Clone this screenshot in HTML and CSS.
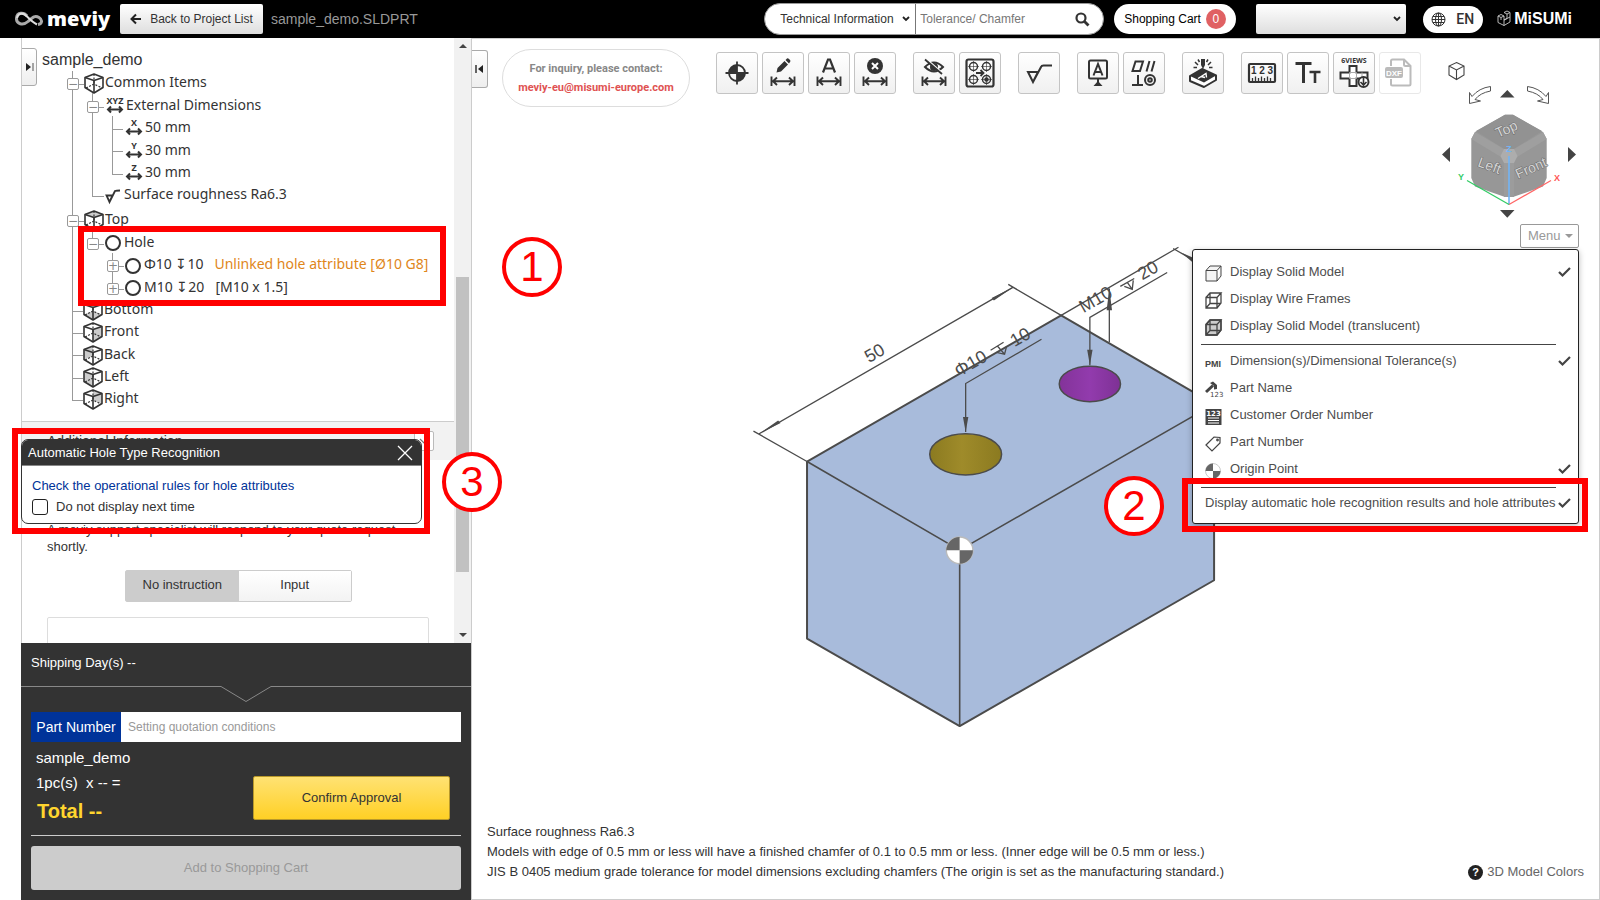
FILE: index.html
```html
<!DOCTYPE html>
<html lang="en">
<head>
<meta charset="utf-8">
<title>meviy - sample_demo.SLDPRT</title>
<link rel="stylesheet" href="styles.css">
</head>
<body>
<svg class="defs" aria-hidden="true">
  <defs>
    <g id="cube-lines" fill="none" stroke="#333" stroke-width="1.6" stroke-linejoin="round">
      <path d="M10 1 19 4.500V14.500L10 20 1 14.500V4.500Z"/>
      <path d="M1 4.500 10 7.500 19 4.500M10 7.500V20"/>
      <path d="M10 1V11M2 15 10 11 18 15" stroke-width="1.200" stroke-dasharray="2 1.500"/>
    </g>
    <g id="span" fill="none" stroke="#333" stroke-width="1.900">
      <path d="M3.500 18.500V28M26.500 18.500V28M5 23.300H25M9 19.500 5 23.300 9 27M21 19.500 25 23.300 21 27"/>
    </g>
    <g id="arrows" fill="none" stroke="#333" stroke-width="2">
      <path d="M2 13.500H16M5 10.500 2 13.500 5 16.500M13 10.500 16 13.500 13 16.500"/>
    </g>
    <g id="quarters">
      <circle cx="8" cy="8" r="7.500" fill="#fff" stroke="#bbb" stroke-width=".8"/>
      <path d="M8 8V.5A7.500 7.500 0 0 0 .5 8ZM8 8V15.500A7.500 7.500 0 0 0 15.500 8Z" fill="#666"/>
    </g>
    <path id="tick" d="M1 6 4.500 9.500 12 2" fill="none" stroke="#444" stroke-width="2.200"/>
  </defs>
</svg>

<header class="topbar">
  <a class="brand" href="#" aria-label="meviy">
    <svg width="29" height="16" viewBox="0 0 29 16"><path d="M12 5C9 1 2 1 1.500 7S8 15 13 10.500 20 4 24 6.500 27 13 23 13.500" fill="none" stroke="#aaa" stroke-width="3"/><path d="M2 7C3 2 8 1.500 11 4.500S17 11 22 13.500" fill="none" stroke="#ddd" stroke-width="2"/></svg>
    <span>meviy</span>
  </a>
  <button class="back"><svg width="12" height="12" viewBox="0 0 12 12"><path d="M11 6H2M6 1.500 1.500 6 6 10.500" fill="none" stroke="#222" stroke-width="2"/></svg>Back to Project List</button>
  <span class="filename">sample_demo.SLDPRT</span>
  <form class="search">
    <select class="topic" aria-label="Search category"><option>Technical Information</option></select>
    <input type="text" placeholder="Tolerance/ Chamfer" aria-label="Search">
    <button type="button" aria-label="Search"><svg width="15" height="15" viewBox="0 0 15 15"><circle cx="6" cy="6" r="4.500" fill="none" stroke="#333" stroke-width="2.200"/><path d="M9.500 9.500 13.500 13.500" stroke="#333" stroke-width="2.800"/></svg></button>
  </form>
  <a class="cart" href="#">Shopping Cart<span class="count">0</span></a>
  <select class="account" aria-label="Account"><option></option></select>
  <button class="lang"><svg width="15" height="15" viewBox="0 0 15 15" fill="none" stroke="#333"><circle cx="7.500" cy="7.500" r="6.500"/><ellipse cx="7.500" cy="7.500" rx="3" ry="6.500"/><path d="M7.500 1V14M1 7.500H14M2 4.500H13M2 10.500H13"/></svg>EN</button>
  <a class="misumi" href="#"><svg width="14" height="18" viewBox="0 0 14 18" fill="none" stroke="#ccc" stroke-width=".9"><path d="M1 6 4 4.500 7 6V15.500L1 12.500ZM1 6 4 7.500 7 6M4 7.500V10M7 10 13 7V12L7 15.500M7 10 10 8.500V4L7 2.500 10 1 13 2.500V7M10 4 13 2.500"/></svg><span>MiSUMi</span></a>
</header>

<main class="workspace">
  <aside class="sidebar">
    <div class="scroll">
      <div class="scroll-body">
        <button class="fold fold-left" aria-label="Expand panel"><svg width="9" height="10" viewBox="0 0 9 10"><path d="M1 1 6 5 1 9Z" fill="#222"/><path d="M8 1V9" stroke="#888" stroke-width="1.500"/></svg></button>
        <nav class="tree" aria-label="Model tree">
          <div class="root">sample_demo</div>
          <ul>
            <li>
              <div class="row"><button class="exp" aria-label="Collapse">−</button><svg class="cube" width="20" height="21" viewBox="0 0 20 21"><use href="#cube-lines"/></svg>Common Items</div>
              <ul>
                <li>
                  <div class="row tall"><button class="exp" aria-label="Collapse">−</button><svg class="xyz" width="20" height="19" viewBox="0 0 20 19"><text x="10" y="8" text-anchor="middle" class="axis">XYZ</text><use href="#arrows" x="1"/></svg>External Dimensions</div>
                  <ul>
                    <li><div class="row leaf"><svg class="dim" width="18" height="19" viewBox="0 0 18 19"><text x="9" y="8" text-anchor="middle" class="axis">X</text><use href="#arrows"/></svg>50 mm</div></li>
                    <li><div class="row leaf tall"><svg class="dim" width="18" height="19" viewBox="0 0 18 19"><text x="9" y="8" text-anchor="middle" class="axis">Y</text><use href="#arrows"/></svg>30 mm</div></li>
                    <li><div class="row leaf"><svg class="dim" width="18" height="19" viewBox="0 0 18 19"><text x="9" y="8" text-anchor="middle" class="axis">Z</text><use href="#arrows"/></svg>30 mm</div></li>
                  </ul>
                </li>
                <li><div class="row leaf rough"><svg width="18" height="19" viewBox="0 0 18 19"><path d="M2.500 9.500H8.500L5.500 16Z M5.500 16 11 5Q12 4.500 16 4.500" fill="none" stroke="#333" stroke-width="1.800"/></svg>Surface roughness Ra6.3</div></li>
              </ul>
            </li>
            <li class="face-top">
              <div class="row"><button class="exp" aria-label="Collapse">−</button><svg class="cube" width="20" height="21" viewBox="0 0 20 21"><path d="M10 1 19 4.500 10 7.500 1 4.500Z" fill="#ccc"/><use href="#cube-lines"/></svg>Top</div>
              <ul>
                <li>
                  <div class="row tall"><button class="exp" aria-label="Collapse">−</button><svg width="18" height="18" viewBox="0 0 18 18"><circle cx="9" cy="9" r="7" fill="none" stroke="#333" stroke-width="2"/></svg>Hole</div>
                  <ul>
                    <li><div class="row"><button class="exp" aria-label="Expand">+</button><svg width="18" height="18" viewBox="0 0 18 18"><circle cx="9" cy="9" r="7" fill="none" stroke="#333" stroke-width="2"/></svg>Φ10 ↧10<span class="attr warn">Unlinked hole attribute [Ø10 G8]</span></div></li>
                    <li><div class="row tall"><button class="exp" aria-label="Expand">+</button><svg width="18" height="18" viewBox="0 0 18 18"><circle cx="9" cy="9" r="7" fill="none" stroke="#333" stroke-width="2"/></svg>M10 ↧20<span class="attr">[M10 x 1.5]</span></div></li>
                  </ul>
                </li>
              </ul>
            </li>
            <li><div class="row leaf"><svg class="cube" width="20" height="21" viewBox="0 0 20 21"><path d="M10 11 19 14.500 10 20 1 14.500Z" fill="#ccc"/><use href="#cube-lines"/></svg>Bottom</div></li>
            <li><div class="row leaf"><svg class="cube" width="20" height="21" viewBox="0 0 20 21"><path d="M10 7.500 19 4.500V14.500L10 20Z" fill="#ccc"/><use href="#cube-lines"/></svg>Front</div></li>
            <li><div class="row leaf tall"><svg class="cube" width="20" height="21" viewBox="0 0 20 21"><path d="M10 1V11L1 14.500V4.500Z" fill="#ccc"/><use href="#cube-lines"/></svg>Back</div></li>
            <li><div class="row leaf"><svg class="cube" width="20" height="21" viewBox="0 0 20 21"><path d="M1 4.500 10 7.500V20L1 14.500Z" fill="#ccc"/><use href="#cube-lines"/></svg>Left</div></li>
            <li><div class="row leaf"><svg class="cube" width="20" height="21" viewBox="0 0 20 21"><path d="M10 1 19 4.500V14.500L10 11Z" fill="#ccc"/><use href="#cube-lines"/></svg>Right</div></li>
          </ul>
          <div class="mark mark-tree"></div>
        </nav>
        <section class="additional">
          <h2>Additional Information<button aria-label="Toggle section"><svg width="10" height="7" viewBox="0 0 10 7"><path d="M1 1 5 5 9 1" fill="none" stroke="#777" stroke-width="1.200"/></svg></button></h2>
          <hr>
          <p>A meviy support specialist will respond to your quote request shortly.</p>
          <div class="segmented"><button class="on">No instruction</button><button>Input</button></div>
          <textarea aria-label="Instruction"></textarea>
        </section>
      </div>
      <div class="bar"><i class="up"></i><span class="thumb"></span><i class="down"></i></div>
    </div>

    <section class="quote">
      <div class="ship">Shipping Day(s) --</div>
      <div class="notch"><i></i><svg width="52" height="17" viewBox="0 0 52 17"><path d="M0 .5H1L26 15.500 51 .5H52" fill="none" stroke="#888"/></svg><i></i></div>
      <div class="quote-body">
        <label class="part"><span>Part Number</span><input type="text" placeholder="Setting quotation conditions"></label>
        <div class="summary">
          <div class="figures">
            <div class="name">sample_demo</div>
            <div class="qty">1pc(s)&nbsp; x -- =</div>
            <div class="total">Total --</div>
          </div>
          <button class="confirm">Confirm Approval</button>
        </div>
        <button class="add" disabled>Add to Shopping Cart</button>
      </div>
    </section>

    <div class="popup" role="dialog" aria-label="Automatic Hole Type Recognition">
      <div class="popup-head">Automatic Hole Type Recognition<button aria-label="Close"><svg width="16" height="16" viewBox="0 0 16 16"><path d="M1 1 15 15M15 1 1 15" stroke="#fff" stroke-width="1.300"/></svg></button></div>
      <div class="popup-body">
        <a href="#">Check the operational rules for hole attributes</a>
        <label><input type="checkbox">Do not display next time</label>
      </div>
    </div>
    <div class="mark mark-popup"></div>
    <div class="step step-3">3</div>
  </aside>

  <section class="viewer">
    <svg class="canvas" viewBox="472 38 1128 862" role="img" aria-label="3D model of sample_demo">
      <defs>
        <linearGradient id="gold"><stop offset="0" stop-color="#8b7a20"/><stop offset=".45" stop-color="#9f8b2a"/><stop offset="1" stop-color="#8b7a20"/></linearGradient>
        <linearGradient id="violet"><stop offset="0" stop-color="#833399"/><stop offset=".5" stop-color="#923bad"/><stop offset="1" stop-color="#7e3195"/></linearGradient>
      </defs>
      <path d="M807 461.500 1061.700 315 1215 404V580.500L960 726.700 807 639Z" fill="#a8bbdb" stroke="#4b4b4b" stroke-width="2" stroke-linejoin="round"/>
      <path d="M807 461.500 960 550.300 1215 404M960 550.300V726.700" fill="none" stroke="#4b4b4b" stroke-width="1.600"/>
      <ellipse cx="966" cy="454.300" rx="36" ry="20.700" fill="url(#gold)" stroke="#4b4b4b" stroke-width="1.500"/>
      <ellipse cx="1090.500" cy="383.700" rx="30.700" ry="17.800" fill="url(#violet)" stroke="#4b4b4b" stroke-width="1.500"/>
      <g fill="none" stroke="#4b4b4b" stroke-width="1.300">
        <path d="M753.300 431 807 461.500M1008.700 284 1061.700 315M759 433.700 1013.300 287"/>
        <path d="M966 432V383.300L1042 339M1090.500 365V317L1168 272"/>
        <path d="M1061.700 315 1179.300 246.700M1174 248 1200 263M1110 288V342"/>
      </g>
      <g fill="#4b4b4b">
        <path d="M759 433.700 778 420.500 780.500 423ZM1013.300 287 994.300 300 992 297.500ZM963.300 417H968.700L966 432ZM1087.800 349.500H1093.200L1090.500 365ZM1110 288 1107.300 310H1112.700ZM1182 252 1196 264 1198 259Z"/>
      </g>
      <g class="dims">
        <text transform="translate(869 363) rotate(-30)">50</text>
        <text transform="translate(959 377) rotate(-30)">Φ10</text>
        <text transform="translate(1015 347) rotate(-30)">10</text>
        <text transform="translate(1084 313) rotate(-30)">M10</text>
        <text transform="translate(1143 280) rotate(-30)">20</text>
      </g>
      <g fill="none" stroke="#4b4b4b" stroke-width="1.300">
        <path d="M991 350 1004 342M998 346 1005 354M997 352 1005 354 1007 346M1121 286 1135 278M1128 282 1133 289M1125 286 1133 289 1134 280"/>
      </g>
      <use href="#quarters" transform="translate(945.700 536.300) scale(1.780)"/>
    </svg>

    <div class="tools-row">
      <button class="fold fold-right" aria-label="Collapse panel"><svg width="9" height="10" viewBox="0 0 9 10"><path d="M8 1 3 5 8 9Z" fill="#222"/><path d="M1 1V9" stroke="#333" stroke-width="1.500"/></svg></button>
      <div class="inquiry"><span>For inquiry, please contact:</span><a href="#">meviy-eu@misumi-europe.com</a></div>
      <div class="toolbar">
        <div class="group">
          <button aria-label="Origin"><svg viewBox="0 0 30 30"><circle cx="15" cy="15" r="8" fill="none" stroke="#333" stroke-width="1.800"/><path d="M15 15V7A8 8 0 0 0 7 15ZM15 15V23A8 8 0 0 0 23 15Z" fill="#333"/><path d="M15 3.500V26.500M3.500 15H26.500" stroke="#333" stroke-width="1.800"/></svg></button>
          <button aria-label="Edit dimension"><svg viewBox="0 0 30 30"><use href="#span"/><path d="M8.500 14.500 9.500 10 16.500 3 20 6.500 13 13.500ZM17.500 2 19 .5Q20 0 21 1L22 2Q23 3 22 4L21 5.500Z" fill="#333"/></svg></button>
          <button aria-label="Text dimension"><svg viewBox="0 0 30 30"><use href="#span"/><path d="M9 14.500 14 1.500H16L21 14.500M10.500 10.500H19.500" fill="none" stroke="#333" stroke-width="2.200"/></svg></button>
          <button aria-label="Delete dimension"><svg viewBox="0 0 30 30"><use href="#span"/><circle cx="15" cy="8" r="8" fill="#333"/><path d="M12 5 18 11M18 5 12 11" stroke="#fff" stroke-width="2"/></svg></button>
        </div>
        <div class="group">
          <button aria-label="Hide dimensions"><svg viewBox="0 0 30 30"><use href="#span"/><path d="M6 9Q15 0 24 9 15 18 6 9Z" fill="none" stroke="#333" stroke-width="2"/><circle cx="15" cy="9" r="4" fill="#333"/><path d="M6 0 22 14" stroke="#fafafa" stroke-width="2"/><path d="M6 1.500 23 16" stroke="#333" stroke-width="1.800"/></svg></button>
          <button aria-label="Copy holes"><svg viewBox="0 0 30 30" fill="none" stroke="#333" stroke-width="1.500"><rect x="1.500" y="1.500" width="27" height="27" rx="2" stroke-width="2.200"/><circle cx="8.500" cy="8.500" r="4"/><circle cx="21.500" cy="8.500" r="4"/><circle cx="8.500" cy="21.500" r="4"/><circle cx="21.500" cy="21.500" r="4"/><circle cx="21.500" cy="21.500" r="1.500" fill="#333"/><path d="M8.500 3V14M3 8.500H14M21.500 3V14M16 8.500H27M8.500 16V27M3 21.500H14M21.500 16V27M16 21.500H27" stroke-width=".6"/><path d="M11 15H18M15.500 12 18.500 15 15.500 18" stroke-width="1.800"/></svg></button>
        </div>
        <div class="group">
          <button aria-label="Surface roughness"><svg viewBox="0 0 30 30"><path d="M4 14H14L9 24ZM9 24 17 9Q17.500 7.500 19.500 7.500H28" fill="none" stroke="#333" stroke-width="2"/></svg></button>
        </div>
        <div class="group">
          <button aria-label="Datum"><svg viewBox="0 0 30 30"><rect x="6" y="2.500" width="18" height="18" rx="1.500" fill="none" stroke="#333" stroke-width="2"/><path d="M10.500 17.500 15 6 19.500 17.500M12 14H18M15 20V27" fill="none" stroke="#333" stroke-width="2"/><path d="M10.500 28 15 23 19.500 28Z" fill="#333"/></svg></button>
          <button aria-label="Geometric tolerance"><svg viewBox="0 0 30 30" fill="none" stroke="#333" stroke-width="2"><path d="M3.500 13 6.500 3.500H14L11 13ZM17.500 13.500 20.500 3M22.500 13.500 25.500 3M9 17V26M3 27H14"/><circle cx="21" cy="22" r="5"/><circle cx="21" cy="22" r="1.800"/></svg></button>
        </div>
        <div class="group">
          <button aria-label="Engraving"><svg viewBox="0 0 30 30"><path d="M2 18 14 11 28 17.500V22L16 29 2 23Z" fill="#fff" stroke="#333" stroke-width="2" stroke-linejoin="round"/><path d="M2 18 14 11 28 17.500 16 24.500Z" fill="#333"/><path d="M10 20.500 18 15.500 18.500 19.500M13 18.500 17 19.500" fill="none" stroke="#fff" stroke-width="1.400"/><path d="M13 1H17V7L15 11 13 7Z" fill="#333"/><path d="M7 4 10 7M23 4 20 7M5.500 9.500H9M24.500 9.500H21M10 1.500 11.500 4M20 1.500 18.500 4" stroke="#333" stroke-width="1.500"/></svg></button>
        </div>
        <div class="group">
          <button aria-label="Measure"><svg viewBox="0 0 30 30"><rect x="2" y="6" width="26" height="18" rx="1" fill="none" stroke="#333" stroke-width="2.200"/><text x="15" y="16" text-anchor="middle" class="num">1 2 3</text><path d="M5.500 23V20M8.500 23V18.500M11.500 23V20M14.500 23V18.500M17.500 23V20M20.500 23V18.500M23.500 23V20" stroke="#333" stroke-width="1.300"/></svg></button>
          <button aria-label="Text size"><svg viewBox="0 0 30 30" fill="none" stroke="#333"><path d="M2.500 5.500H18.500M10.500 5.500V25" stroke-width="3"/><path d="M16.500 14H27.500M22 14V25" stroke-width="2.600"/></svg></button>
          <button aria-label="Six views"><svg viewBox="0 0 30 30"><text x="15" y="5" text-anchor="middle" class="views">6VIEWS</text><path d="M10.500 8H17.500V14.500H28.500V20.500H17.500V28H10.500V20.500H1.500V14.500H10.500Z" fill="#fff" stroke="#333" stroke-width="2"/><path d="M10.500 14.500H17.500V20.500H10.500ZM23 14.500V20" fill="none" stroke="#aaa"/><circle cx="24.500" cy="24" r="5" fill="#fff" stroke="#333" stroke-width="2"/><path d="M24.500 20V26.500M21.500 24 24.500 27 27.500 24" fill="none" stroke="#333" stroke-width="1.600"/></svg></button>
          <button aria-label="DXF" disabled><svg viewBox="0 0 30 30"><path d="M6 8V3Q6 1.500 7.500 1.500H19L25.500 8V26Q25.500 27.500 24 27.500H7.500Q6 27.500 6 26V21M19 1.500V6.500Q19 8 20.500 8H25.500" fill="none" stroke="#bbb" stroke-width="2"/><rect x="0" y="9" width="18" height="11" rx="2" fill="#bbb"/><text x="9" y="17.500" text-anchor="middle" class="dxf">DXF</text></svg></button>
        </div>
      </div>
    </div>

    <svg class="viewcube" width="150" height="162" viewBox="1440 60 150 162" role="img" aria-label="View orientation">
      <path d="M1456.500 62.500 1464 66V75L1456.500 79.500 1449 75V66ZM1449 66 1456.500 70 1464 66M1456.500 70V79.500" fill="#fff" stroke="#444" stroke-width="1.100"/>
      <path id="turn" d="M1490.500 86.500V91Q1480 93 1475 99.500L1480.500 101 1469.500 103.500V92.500L1472 96.500Q1479 88 1490.500 86.500Z" fill="#fff" stroke="#555"/>
      <use href="#turn" transform="translate(3018 0) scale(-1 1)"/>
      <path d="M1500 97.500H1514.500L1507.300 90ZM1500 210H1514.500L1507.300 217.800ZM1442 154.500 1450 147V162ZM1576 154.500 1568 147V162Z" fill="#444"/>
      <path d="M1505 114.700H1513L1543 132 1546.700 139V178L1543 186.500 1513 197H1505L1475 186.500 1471.300 178V139L1475 132Z" fill="#979797"/>
      <path d="M1505 114.700H1513L1542 131 1514 149H1504L1476 131Z" fill="#929292"/>
      <path d="M1475 132 1471.300 139 1501 157 1509 163 1517 157 1546.700 139 1543 132 1514 149H1504Z" fill="#9f9f9f"/>
      <path d="M1504 160H1514V197H1504Z" fill="#9c9c9c"/>
      <path d="M1504 149H1514L1517.500 156 1514 163H1504L1500.500 156Z" fill="#adadad"/>
      <g class="faces"><text transform="translate(1498 138) rotate(-24)">Top</text><text transform="translate(1477 166) rotate(20)">Left</text><text transform="translate(1518 179) rotate(-24)">Front</text></g>
      <path d="M1509 204.500V156" stroke="#72b4f5" stroke-width="1.600"/><path d="M1509 204.500 1551 180.500" stroke="#f66" stroke-width="1.300"/><path d="M1509 204.500 1467 180.500" stroke="#3c6" stroke-width="1.300"/>
      <g class="axes"><text x="1506" y="152" fill="#72b4f5">Z</text><text x="1554" y="181" fill="#f55">X</text><text x="1458" y="180" fill="#3c6">Y</text></g>
    </svg>

    <div class="menu-wrap">
      <button class="menu-button">Menu<i></i></button>
      <ul class="menu">
        <li><svg viewBox="0 0 17 17" fill="#f4f4f4" stroke="#444"><path d="M1 5.500H12V16H1ZM1 5.500 5 1H16L12 5.500M16 1V11L12 16"/></svg>Display Solid Model<svg class="tick" viewBox="0 0 13 11"><use href="#tick"/></svg></li>
        <li><svg viewBox="0 0 17 17" fill="none" stroke="#444" stroke-width="1.300"><path d="M1 5.500H12V16H1ZM1 5.500 5 1H16L12 5.500M16 1V11L12 16M5 1V11.500H16M5 11.500 1 16"/></svg>Display Wire Frames</li>
        <li><svg viewBox="0 0 17 17" fill="none" stroke="#444" stroke-width="1.300"><path d="M1 5.500 5 1H16V11L12 16H1Z" fill="#ccc"/><path d="M1 5.500H12V16H1ZM1 5.500 5 1H16L12 5.500M16 1V11L12 16M5 1V11.500H16M5 11.500 1 16"/></svg>Display Solid Model (translucent)</li>
        <li class="rule" role="separator"></li>
        <li><svg viewBox="0 0 17 17"><text x="0" y="13" class="pmi">PMI</text></svg>Dimension(s)/Dimensional Tolerance(s)<svg class="tick" viewBox="0 0 13 11"><use href="#tick"/></svg></li>
        <li><svg viewBox="0 0 17 17"><path d="M1 11 8 4.500" stroke="#444" stroke-width="3"/><path d="M5 2 8 .5 12 4 12 8 9 8.500 9 5Z" fill="#444"/><text x="5" y="16" class="tiny">123</text></svg>Part Name</li>
        <li><svg viewBox="0 0 17 17"><path d="M.5 1H16.500V17H.5Z" fill="#444"/><path d="M3 10H14M3 12.500H14M3 15H14" stroke="#fff" stroke-width="1.200"/><text x="8.500" y="8" text-anchor="middle" class="tiny bold">123</text></svg>Customer Order Number</li>
        <li><svg viewBox="0 0 17 17" fill="none" stroke="#444" stroke-width="1.200"><path d="M1 10 9 2 15 2.500V8L7 16Z"/><circle cx="12.500" cy="5" r=".8"/></svg>Part Number</li>
        <li><svg viewBox="0 0 17 17"><use href="#quarters" y="1"/></svg>Origin Point<svg class="tick" viewBox="0 0 13 11"><use href="#tick"/></svg></li>
        <li class="rule" role="separator"></li>
        <li class="wide">Display automatic hole recognition results and hole attributes<svg class="tick" viewBox="0 0 13 11"><use href="#tick"/></svg></li>
      </ul>
      <div class="mark mark-menu"></div>
      <div class="step step-2">2</div>
    </div>
    <div class="step step-1">1</div>

    <footer class="notes">
      <div>
        <p>Surface roughness Ra6.3</p>
        <p>Models with edge of 0.5 mm or less will have a finished chamfer of 0.1 to 0.5 mm or less. (Inner edge will be 0.5 mm or less.)</p>
        <p>JIS B 0405 medium grade tolerance for model dimensions excluding chamfers (The origin is set as the manufacturing standard.)</p>
      </div>
      <a href="#"><b>?</b>3D Model Colors</a>
    </footer>
  </section>
</main>
</body>
</html>
```

FILE: styles.css
```css
* { box-sizing: border-box; }
body, ul, p, h2 { margin: 0; padding: 0; }
ul { list-style: none; }
body {
  display: flex;
  flex-direction: column;
  height: 100vh;
  overflow: hidden;
  font: 13px/16px "Liberation Sans", Arial, sans-serif;
  color: #333;
  background: #fff;
}
button, input, select, textarea { font: inherit; color: inherit; }
button { padding: 0; cursor: pointer; }
a { color: inherit; text-decoration: none; }
svg { display: block; flex: none; }
.defs { position: absolute; width: 0; height: 0; }

/* Header */
.topbar {
  flex: none;
  display: flex;
  align-items: center;
  height: 38px;
  padding: 0 28px 0 15px;
  background: #000;
  font-size: 12px;
}
.brand { display: flex; align-items: center; gap: 3px; width: 105px; color: #fff; }
.brand span { font: 800 20px/24px "Open Sans", sans-serif; }
.back {
  display: flex;
  align-items: center;
  justify-content: center;
  gap: 8px;
  width: 143px;
  height: 30px;
  border: 0;
  border-radius: 2px;
  background: linear-gradient(#fff, #dedede);
}
.filename { margin: 0 auto 0 8px; font-size: 14px; color: #999; }
.search {
  display: flex;
  align-items: center;
  width: 340px;
  height: 32px;
  margin-right: 10px;
  border: 1px solid #999;
  border-radius: 16px;
  background: #fff;
  overflow: hidden;
}
.topic, .account {
  --chevron: url("data:image/svg+xml,%3Csvg xmlns='http://www.w3.org/2000/svg' viewBox='0 0 8 6'%3E%3Cpath d='M1 1 4 4 7 1' fill='none' stroke='%23222' stroke-width='1.800'/%3E%3C/svg%3E") no-repeat right 5px center / 8px 6px;
  appearance: none;
  border: 0;
  background: var(--chevron);
}
.topic { width: 151px; height: 30px; padding: 0 0 0 15px; border-right: 1px solid #777; }
.search input { flex: 1; min-width: 0; height: 30px; padding: 0 4px; border: 0; background: none; outline: 0; }
.search input::placeholder { color: #777; }
.search button { width: 40px; padding: 0 0 0 12px; border: 0; background: none; }
.cart {
  display: flex;
  align-items: center;
  gap: 5px;
  width: 122px;
  height: 30px;
  margin-right: 20px;
  padding-left: 10px;
  border-radius: 15px;
  background: #fff;
  color: #000;
}
.count {
  width: 20px;
  height: 20px;
  border-radius: 50%;
  background: #e06163;
  color: #fff;
  line-height: 20px;
  text-align: center;
}
.account {
  width: 150px;
  height: 30px;
  margin-right: 17px;
  border-radius: 2px;
  background: var(--chevron), linear-gradient(#fff, #dedede);
}
.lang {
  display: flex;
  align-items: center;
  gap: 10px;
  width: 60px;
  height: 27px;
  margin-right: 14px;
  padding-left: 8px;
  border: 0;
  border-radius: 14px;
  background: #fff;
  font: 500 14px/16px Roboto, sans-serif;
}
.misumi { display: flex; align-items: center; gap: 3px; color: #fff; font: bold 16px/20px "Liberation Sans", sans-serif; }

/* Page frame */
.workspace { flex: 1; display: flex; min-height: 0; padding-left: 21px; }
.sidebar { position: relative; z-index: 1; flex: none; display: flex; flex-direction: column; width: 451px; border: solid #ccc; border-width: 0 1px; }
.scroll { flex: 1; display: flex; min-height: 0; overflow: hidden; }
.scroll-body { position: relative; flex: 1; min-width: 0; }
.bar { display: flex; flex-direction: column; align-items: center; width: 17px; padding: 6px 0; background: #f1f1f1; }
.bar .up, .bar .down { border: 4px solid transparent; border-top: 0; border-bottom-color: #444; }
.bar .down { margin-top: auto; border: 4px solid transparent; border-bottom: 0; border-top-color: #444; }
.thumb { width: 13px; height: 295px; margin-top: 229px; background: #c1c1c1; }
.fold {
  position: absolute;
  display: flex;
  align-items: center;
  justify-content: center;
  width: 16px;
  height: 38px;
  border: 1px solid #aaa;
  background: linear-gradient(#fff, #eee);
}
.fold-left { top: 10px; left: -1px; border-radius: 0 3px 3px 0; }
.fold-right { top: 11px; left: 0; border-left: 0; border-radius: 0 3px 3px 0; }

/* Model tree */
.tree { position: relative; height: 383px; padding: 12px 0 0 20px; font: 14px/22px "Noto Sans", sans-serif; white-space: nowrap; }
.root { height: 21px; font: 16px/20px "Liberation Sans", sans-serif; }
.tree ul { padding-left: 20px; }
.tree > ul { padding-left: 30px; }
.tree li { position: relative; }
.tree li::before { content: ""; position: absolute; top: 0; bottom: 0; left: 0; border-left: 1px solid #999; }
.tree li:last-child::before { bottom: auto; height: 14px; }
.row { display: flex; align-items: center; height: 22px; }
.row.tall { height: 23px; }
.row::before { content: ""; order: -1; width: 11px; margin-top: 4px; border-top: 1px solid #999; }
.row:has(.exp)::before { display: none; }
.exp {
  position: relative;
  width: 12px;
  height: 12px;
  margin: 4px 5px 0 -5px;
  border: 1px solid #999;
  border-radius: 2px;
  background: #fff;
  color: #888;
  font: 12px/10px "DejaVu Sans", sans-serif;
}
.exp::after { content: ""; position: absolute; top: 5px; left: 11px; width: 5px; border-top: 1px solid #999; }
.row svg { margin: 3px 2px 0 0; overflow: visible; }
.row svg.cube { margin-right: 1px; }
.row svg.xyz { margin: 1px 1px 0 1px; }
.row svg.dim { margin: 1px 2px 0 2px; }
.tree .face-top { padding-top: 3px; }
.rough { padding-left: 1px; }
.axis { font: bold 9px "Open Sans", sans-serif; fill: #333; }
.attr { margin-left: 11px; }
.warn { color: #e0861a; }

/* Annotation marks */
.mark { position: absolute; border: 6px solid #f00; pointer-events: none; }
.mark-tree { top: 188px; left: 56px; width: 368px; height: 80px; }
.mark-popup { top: 390px; left: -10px; width: 418px; height: 106px; }
.mark-menu { top: 254px; left: -10px; right: -9px; height: 54px; }
.step {
  position: absolute;
  width: 60px;
  height: 60px;
  border: 4px solid #f00;
  border-radius: 50%;
  background: #fff;
  color: #f00;
  font-size: 42px;
  line-height: 52px;
  text-align: center;
}
.step-1 { top: 198px; left: 30px; }
.step-2 { top: 252px; left: -88px; }
.step-3 { top: 414px; left: 420px; }

/* Additional information */
.additional h2 {
  display: flex;
  justify-content: space-between;
  align-items: center;
  height: 39px;
  padding: 0 20px 0 25px;
  border-top: 1px solid #ccc;
  background: #f2f2f2;
  font-size: 14px;
  font-weight: normal;
}
.additional h2 button { display: grid; place-items: center; width: 20px; height: 20px; border: 1px solid #bbb; border-radius: 2px; background: #fff; }
.additional hr { margin: 35px 32px 0 25px; border: 0; border-top: 1px solid #333; }
.additional p { margin: 25px 50px 0 25px; line-height: 17px; }
.segmented { display: flex; width: 227px; height: 32px; margin: 15px 0 15px 103px; border: 1px solid #ccc; border-radius: 2px; }
.segmented button { flex: 1; padding-bottom: 2px; border: 0; background: linear-gradient(#fff, #f3f3f3); }
.segmented .on { background: #ccc; }
.additional textarea { display: block; width: 382px; height: 80px; margin-left: 25px; border: 1px solid #ddd; border-radius: 2px; resize: none; }

/* Quotation */
.quote { flex: none; margin: 0 0 0 -1px; padding-bottom: 10px; background: #333; color: #fff; }
.ship { padding: 12px 10px 15px; }
.notch { display: flex; }
.notch i { flex: 1; border-top: 1px solid #888; }
.notch i:first-child { flex: 0 0 199px; }
.quote-body { padding: 9px 10px 0; }
.part { display: flex; height: 30px; }
.part span { width: 90px; background: #039; font-size: 14px; line-height: 30px; text-align: center; }
.part input { flex: 1; min-width: 0; padding: 0 7px; border: 0; background: #fff; color: #333; font-size: 12px; }
.part input::placeholder { color: #999; }
.summary { display: flex; justify-content: space-between; align-items: flex-end; margin-bottom: 10px; padding: 3px 11px 15px 5px; border-bottom: 1px solid #ccc; }
.figures { font-size: 15px; line-height: 25px; }
.total { padding: 7px 0 0 1px; font-size: 20px; line-height: 18px; font-weight: bold; color: #ffd52e; }
.quote button { height: 44px; border: 1px solid #b8982a; border-radius: 2px; }
.confirm { width: 197px; background: linear-gradient(#ffe273, #ffd025); color: #333; }
.quote .add { width: 100%; border: 0; border-radius: 3px; background: #ccc; color: #999; }

/* Hole recognition popup */
.popup { position: absolute; top: 401px; left: -1px; width: 401px; height: 85px; border: 1px solid #333; border-radius: 7px; background: #fff; overflow: hidden; }
.popup-head { display: flex; justify-content: space-between; align-items: center; height: 26px; padding: 0 8px 0 6px; background: #333; border-bottom: 1px solid #888; color: #fff; }
.popup-head button { border: 0; background: none; }
.popup-body { padding: 12px 10px; }
.popup-body a { display: block; color: #039; }
.popup-body label { display: flex; align-items: center; gap: 8px; margin-top: 5px; }
.popup-body input { appearance: none; width: 16px; height: 16px; margin: 0; border: 1px solid #222; border-radius: 3px; background: #fff; }

/* Viewer */
.viewer { position: relative; flex: 1; display: flex; flex-direction: column; min-width: 0; border: solid #ccc; border-width: 1px 1px 1px 0; }
.canvas { position: absolute; top: 0; left: 0; width: 100%; height: 100%; }
.dims { font: 18px "Liberation Sans", sans-serif; fill: #4b4b4b; }
.tools-row { position: relative; display: flex; align-items: flex-start; padding: 10px 0 0 30px; }
.inquiry {
  display: flex;
  flex-direction: column;
  justify-content: center;
  width: 188px;
  height: 58px;
  margin-right: 26px;
  border: 1px solid #ddd;
  border-radius: 29px;
  font: bold 11px/19px Roboto, sans-serif;
  color: #888;
  text-align: center;
}
.inquiry a { color: #e05252; }
.toolbar { display: flex; gap: 17px; padding-top: 3px; }
.group { display: flex; gap: 4px; }
.group button { display: grid; place-items: center; width: 42px; height: 42px; border: 1px solid #c4c4c4; border-radius: 3px; background: linear-gradient(#fff, #f0f0f0); }
.group button:disabled { border-color: #e8e8e8; background: #fff; }
.group svg { width: 30px; height: 30px; overflow: visible; }
.num { font: bold 10px "Liberation Sans", sans-serif; fill: #333; }
.views { font: bold 7px "Open Sans", sans-serif; fill: #333; }
.dxf { font: bold 8px "Liberation Sans", sans-serif; fill: #fff; }

.viewcube { position: absolute; top: 21px; right: 9px; }
.faces { font: 14px "Liberation Sans", sans-serif; fill: #d4d4d4; stroke: #6c6c6c; stroke-width: 1px; paint-order: stroke; }
.axes { font: bold 9px "Liberation Sans", sans-serif; }

.menu-wrap { position: absolute; top: 185px; right: 20px; display: flex; flex-direction: column; align-items: flex-end; width: 387px; }
.menu-button { display: flex; align-items: center; justify-content: space-between; width: 59px; height: 24px; padding: 0 5px 0 7px; border: 1px solid #999; border-radius: 2px; background: #fff; color: #999; }
.menu-button i { border: 4px solid transparent; border-top-color: #999; border-bottom: 0; }
.menu { width: 100%; margin-top: 1px; padding: 8px 7px 8px 12px; border: 1px solid #222; border-radius: 3px; background: #fff; box-shadow: 0 2px 6px #0004; color: #4d4d4d; }
.menu li { display: flex; align-items: center; gap: 8px; height: 27px; }
.menu li svg { width: 17px; height: 17px; margin-top: 3px; overflow: visible; }
.menu li .tick { width: 13px; height: 11px; margin: 0 0 0 auto; }
.menu .rule { height: 1px; margin: 5px 15px 2px -4px; background: #444; }
.menu .wide { gap: 0; height: 25px; }
.pmi { font: bold 9px "Liberation Sans", sans-serif; fill: #444; }
.tiny { font: 7px "DejaVu Sans", sans-serif; fill: #444; }
.tiny.bold { font-weight: bold; fill: #fff; }

.notes { position: relative; display: flex; justify-content: space-between; align-items: flex-end; margin-top: auto; padding: 0 15px 17px; line-height: 20px; }
.notes a { display: flex; align-items: center; gap: 4px; color: #666; }
.notes b { width: 15px; height: 15px; border-radius: 50%; background: #222; color: #fff; font-size: 11px; line-height: 15px; text-align: center; }
```
